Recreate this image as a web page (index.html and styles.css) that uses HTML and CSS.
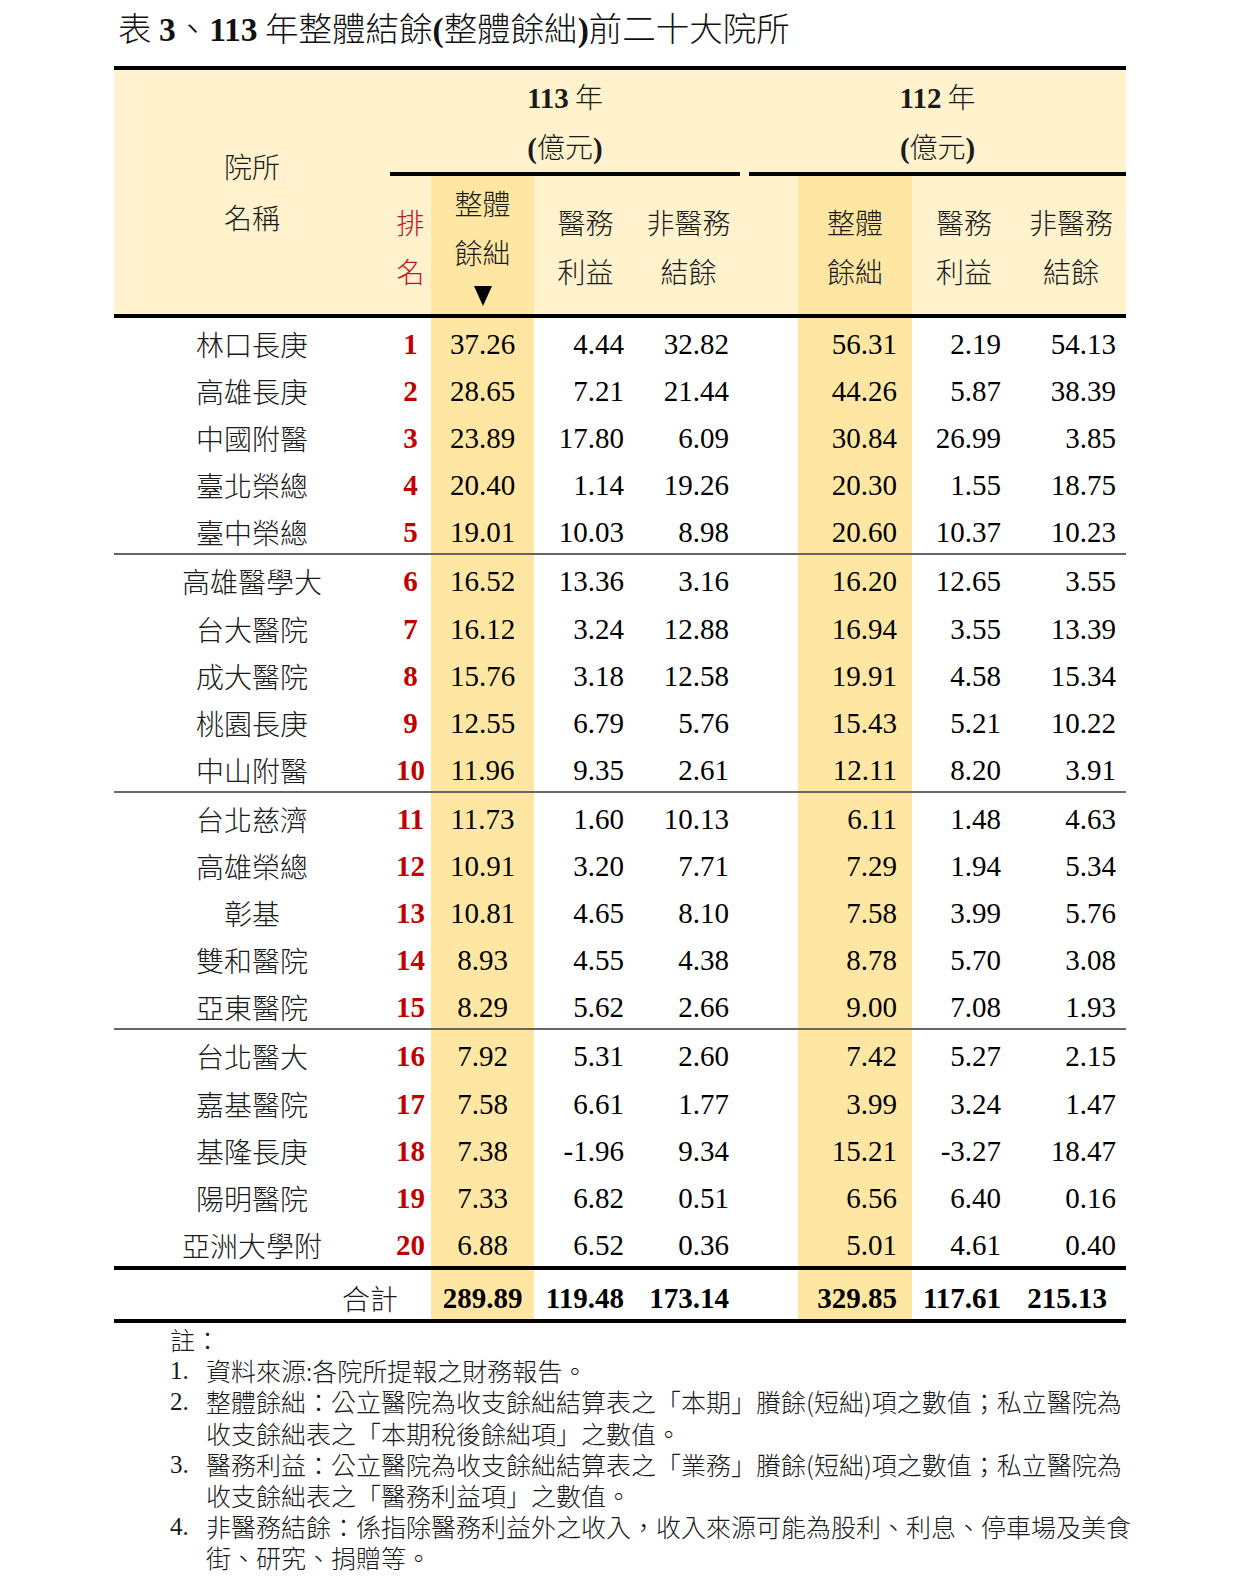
FILE: index.html
```html
<!DOCTYPE html>
<html lang="zh-Hant">
<head>
<meta charset="utf-8">
<title>表3 113年整體結餘前二十大院所</title>
<link rel="stylesheet" href="styles.css">
</head>
<body>
<h1 class="title">表 <span class="n">3</span>、<span class="n">113</span> 年整體結餘<span class="n">(</span>整體餘絀<span class="n">)</span>前二十大院所</h1>

<table class="tbl">
  <colgroup>
    <col class="w-name"><col class="w-rank"><col class="w-c1"><col class="w-c2"><col class="w-c3">
    <col class="w-sp"><col class="w-gap"><col class="w-c5"><col class="w-c6"><col class="w-c7">
  </colgroup>
  <thead>
    <tr class="h1">
      <th class="hname" rowspan="2"><div>院所</div><div>名稱</div></th>
      <th class="yr" colspan="4"><div><span class="b">113</span> 年</div><div><span class="b">(</span>億元<span class="b">)</span></div></th>
      <th class="sp" rowspan="2"></th>
      <th class="yr" colspan="4"><div><span class="b">112</span> 年</div><div><span class="b">(</span>億元<span class="b">)</span></div></th>
    </tr>
    <tr class="h2">
      <th class="hrank"><div>排</div><div>名</div></th>
      <th class="hl hsort"><div>整體</div><div>餘絀</div><div class="tri"><span class="tri-shape"></span></div></th>
      <th class="hsub"><div>醫務</div><div>利益</div></th>
      <th class="hsub"><div>非醫務</div><div>結餘</div></th>
      <th></th>
      <th class="hl hsub"><div>整體</div><div>餘絀</div></th>
      <th class="hsub"><div>醫務</div><div>利益</div></th>
      <th class="hsub"><div>非醫務</div><div>結餘</div></th>
    </tr>
  </thead>
  <tbody class="grp">
    <tr><td class="name">林口長庚</td><td class="rank">1</td><td class="c1 hl">37.26</td><td class="c2">4.44</td><td class="c3">32.82</td><td colspan="2"></td><td class="c5 hl">56.31</td><td class="c6">2.19</td><td class="c7">54.13</td></tr>
    <tr><td class="name">高雄長庚</td><td class="rank">2</td><td class="c1 hl">28.65</td><td class="c2">7.21</td><td class="c3">21.44</td><td colspan="2"></td><td class="c5 hl">44.26</td><td class="c6">5.87</td><td class="c7">38.39</td></tr>
    <tr><td class="name">中國附醫</td><td class="rank">3</td><td class="c1 hl">23.89</td><td class="c2">17.80</td><td class="c3">6.09</td><td colspan="2"></td><td class="c5 hl">30.84</td><td class="c6">26.99</td><td class="c7">3.85</td></tr>
    <tr><td class="name">臺北榮總</td><td class="rank">4</td><td class="c1 hl">20.40</td><td class="c2">1.14</td><td class="c3">19.26</td><td colspan="2"></td><td class="c5 hl">20.30</td><td class="c6">1.55</td><td class="c7">18.75</td></tr>
    <tr><td class="name">臺中榮總</td><td class="rank">5</td><td class="c1 hl">19.01</td><td class="c2">10.03</td><td class="c3">8.98</td><td colspan="2"></td><td class="c5 hl">20.60</td><td class="c6">10.37</td><td class="c7">10.23</td></tr>
  </tbody>
  <tbody class="grp">
    <tr><td class="name">高雄醫學大</td><td class="rank">6</td><td class="c1 hl">16.52</td><td class="c2">13.36</td><td class="c3">3.16</td><td colspan="2"></td><td class="c5 hl">16.20</td><td class="c6">12.65</td><td class="c7">3.55</td></tr>
    <tr><td class="name">台大醫院</td><td class="rank">7</td><td class="c1 hl">16.12</td><td class="c2">3.24</td><td class="c3">12.88</td><td colspan="2"></td><td class="c5 hl">16.94</td><td class="c6">3.55</td><td class="c7">13.39</td></tr>
    <tr><td class="name">成大醫院</td><td class="rank">8</td><td class="c1 hl">15.76</td><td class="c2">3.18</td><td class="c3">12.58</td><td colspan="2"></td><td class="c5 hl">19.91</td><td class="c6">4.58</td><td class="c7">15.34</td></tr>
    <tr><td class="name">桃園長庚</td><td class="rank">9</td><td class="c1 hl">12.55</td><td class="c2">6.79</td><td class="c3">5.76</td><td colspan="2"></td><td class="c5 hl">15.43</td><td class="c6">5.21</td><td class="c7">10.22</td></tr>
    <tr><td class="name">中山附醫</td><td class="rank">10</td><td class="c1 hl">11.96</td><td class="c2">9.35</td><td class="c3">2.61</td><td colspan="2"></td><td class="c5 hl">12.11</td><td class="c6">8.20</td><td class="c7">3.91</td></tr>
  </tbody>
  <tbody class="grp">
    <tr><td class="name">台北慈濟</td><td class="rank">11</td><td class="c1 hl">11.73</td><td class="c2">1.60</td><td class="c3">10.13</td><td colspan="2"></td><td class="c5 hl">6.11</td><td class="c6">1.48</td><td class="c7">4.63</td></tr>
    <tr><td class="name">高雄榮總</td><td class="rank">12</td><td class="c1 hl">10.91</td><td class="c2">3.20</td><td class="c3">7.71</td><td colspan="2"></td><td class="c5 hl">7.29</td><td class="c6">1.94</td><td class="c7">5.34</td></tr>
    <tr><td class="name">彰基</td><td class="rank">13</td><td class="c1 hl">10.81</td><td class="c2">4.65</td><td class="c3">8.10</td><td colspan="2"></td><td class="c5 hl">7.58</td><td class="c6">3.99</td><td class="c7">5.76</td></tr>
    <tr><td class="name">雙和醫院</td><td class="rank">14</td><td class="c1 hl">8.93</td><td class="c2">4.55</td><td class="c3">4.38</td><td colspan="2"></td><td class="c5 hl">8.78</td><td class="c6">5.70</td><td class="c7">3.08</td></tr>
    <tr><td class="name">亞東醫院</td><td class="rank">15</td><td class="c1 hl">8.29</td><td class="c2">5.62</td><td class="c3">2.66</td><td colspan="2"></td><td class="c5 hl">9.00</td><td class="c6">7.08</td><td class="c7">1.93</td></tr>
  </tbody>
  <tbody class="grp last">
    <tr><td class="name">台北醫大</td><td class="rank">16</td><td class="c1 hl">7.92</td><td class="c2">5.31</td><td class="c3">2.60</td><td colspan="2"></td><td class="c5 hl">7.42</td><td class="c6">5.27</td><td class="c7">2.15</td></tr>
    <tr><td class="name">嘉基醫院</td><td class="rank">17</td><td class="c1 hl">7.58</td><td class="c2">6.61</td><td class="c3">1.77</td><td colspan="2"></td><td class="c5 hl">3.99</td><td class="c6">3.24</td><td class="c7">1.47</td></tr>
    <tr><td class="name">基隆長庚</td><td class="rank">18</td><td class="c1 hl">7.38</td><td class="c2">-1.96</td><td class="c3">9.34</td><td colspan="2"></td><td class="c5 hl">15.21</td><td class="c6">-3.27</td><td class="c7">18.47</td></tr>
    <tr><td class="name">陽明醫院</td><td class="rank">19</td><td class="c1 hl">7.33</td><td class="c2">6.82</td><td class="c3">0.51</td><td colspan="2"></td><td class="c5 hl">6.56</td><td class="c6">6.40</td><td class="c7">0.16</td></tr>
    <tr><td class="name">亞洲大學附</td><td class="rank">20</td><td class="c1 hl">6.88</td><td class="c2">6.52</td><td class="c3">0.36</td><td colspan="2"></td><td class="c5 hl">5.01</td><td class="c6">4.61</td><td class="c7">0.40</td></tr>
  </tbody>
  <tbody class="total">
    <tr><td class="tname" colspan="2">合計</td><td class="c1 hl">289.89</td><td class="c2">119.48</td><td class="c3">173.14</td><td colspan="2"></td><td class="c5 hl">329.85</td><td class="c6">117.61</td><td class="c7 tc7">215.13</td></tr>
  </tbody>
</table>

<div class="notes">
  <div class="nhead">註：</div>
  <div class="note"><span class="num">1.</span><span class="ntext">資料來源:各院所提報之財務報告。</span></div>
  <div class="note"><span class="num">2.</span><span class="ntext">整體餘絀：公立醫院為收支餘絀結算表之「本期」賸餘(短絀)項之數值；私立醫院為<br>收支餘絀表之「本期稅後餘絀項」之數值。</span></div>
  <div class="note"><span class="num">3.</span><span class="ntext">醫務利益：公立醫院為收支餘絀結算表之「業務」賸餘(短絀)項之數值；私立醫院為<br>收支餘絀表之「醫務利益項」之數值。</span></div>
  <div class="note"><span class="num">4.</span><span class="ntext">非醫務結餘：係指除醫務利益外之收入，收入來源可能為股利、利息、停車場及美食<br>街、研究、捐贈等。</span></div>
</div>
</body>
</html>
```

FILE: styles.css
```css
body {
  margin: 0;
  background: #ffffff;
  color: #000000;
  font-family: "Noto Sans CJK TC", "Noto Sans CJK SC", sans-serif;
}

.title {
  margin: 0;
  padding: 7px 0 0 118px;
  font-size: 33.5px;
  line-height: 40px;
  font-weight: 300;
  color: #111;
}

.title .n {
  font-family: "Liberation Serif", serif;
  font-weight: 700;
}

.tbl {
  margin: 16px 0 0 114px;
  width: 1012px;
  table-layout: fixed;
  border-collapse: collapse;
  border-top: 4px solid #000;
}

.w-name { width: 276px; }
.w-rank { width: 41px; }
.w-c1 { width: 103px; }
.w-c2 { width: 103px; }
.w-c3 { width: 103px; }
.w-sp { width: 9px; }
.w-gap { width: 49px; }
.w-c5 { width: 114px; }
.w-c6 { width: 104px; }
.w-c7 { width: 110px; }

thead {
  background: #FFF2CC;
  border-bottom: 4px solid #000;
}

th {
  padding: 0;
  font-weight: 300;
  font-size: 28px;
  color: #1a1a1a;
  text-align: center;
}

.b {
  font-family: "Liberation Serif", serif;
  font-weight: 700;
  font-size: 29px;
}

.hname {
  line-height: 51px;
  vertical-align: middle;
  padding-top: 0;
}

.yr {
  line-height: 48px;
  padding-top: 2px;
  border-bottom: 4px solid #000;
  vertical-align: middle;
}

.hrank {
  color: #c8102e;
  line-height: 49px;
  padding-top: 4px;
  vertical-align: middle;
}

.hsub {
  line-height: 49px;
  padding-top: 4px;
  vertical-align: middle;
}

.hsort {
  line-height: 49px;
  vertical-align: top;
  padding-top: 3px;
}

.tri {
  height: 37px;
  line-height: 0;
  padding-top: 9px;
  box-sizing: border-box;
}

.tri-shape {
  display: inline-block;
  width: 0;
  height: 0;
  border-left: 9px solid transparent;
  border-right: 9px solid transparent;
  border-top: 20px solid #000;
}

thead .hl { background: #FFE7A3; }

.grp { border-bottom: 2px solid #666; }
.grp.last { border-bottom: 4px solid #000; }
.total { border-bottom: 4px solid #000; }

td {
  padding: 6px 0 0 0;
  line-height: 41.1px;
  font-family: "Liberation Serif", serif;
  font-size: 29px;
  text-align: right;
  white-space: nowrap;
}

td.hl { background: #FFE7A3; }

.name {
  font-family: "Noto Sans CJK TC", sans-serif;
  font-weight: 300;
  font-size: 28px;
  text-align: center;
  color: #1a1a1a;
}

.rank {
  text-align: center;
  font-weight: 700;
  color: #c00000;
}

.c1 { text-align: center; }
.c2 { padding-right: 13px; }
.c3 { padding-right: 11px; }
.c5 { padding-right: 15px; }
.c6 { padding-right: 15px; }
.c7 { padding-right: 10px; }

.total td {
  font-weight: 700;
  padding-top: 8px;
}

.total .tname {
  font-family: "Noto Sans CJK TC", sans-serif;
  font-weight: 300;
  font-size: 28px;
  padding-right: 33px;
  color: #1a1a1a;
}

.total .tc7 { padding-right: 19px; }

.notes {
  margin: 1px 0 0 170px;
  font-size: 25px;
  font-weight: 300;
  line-height: 31.2px;
  color: #1a1a1a;
}

.note {
  display: flex;
}

.num {
  flex: none;
  width: 36px;
  font-family: "Liberation Serif", serif;
}

.ntext {
  flex: 1;
}
```
